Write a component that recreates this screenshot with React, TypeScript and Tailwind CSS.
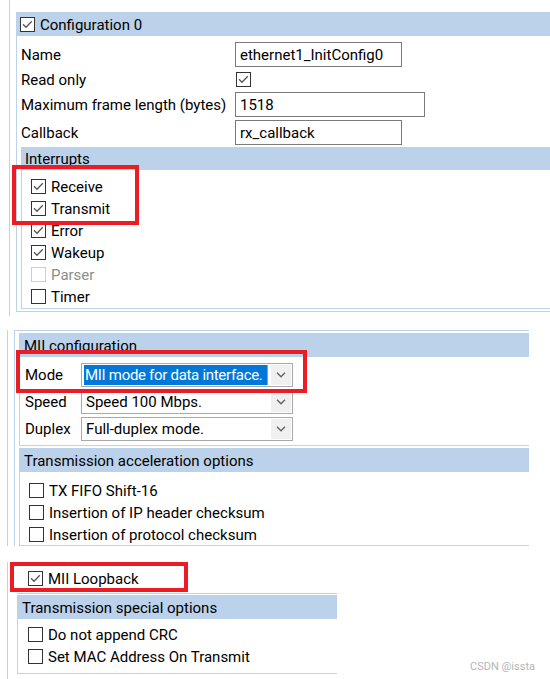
import React from "react"

const FONT = { fontFamily: 'Roboto, "Noto Sans", sans-serif' }

function Box({ checked, disabled }: { checked?: boolean; disabled?: boolean }) {
  return (
    <span
      className={
        "flex h-[15px] w-[15px] shrink-0 items-center justify-center border bg-white " +
        (disabled ? "border-[#cfcfcf]" : "border-[#333333]")
      }
    >
      {checked && (
        <svg width="13" height="13" viewBox="0 0 13 13">
          <path d="M2 6.3 L5 9.3 L10.8 3.3" fill="none" stroke="#555555" strokeWidth="1.25" />
        </svg>
      )}
    </span>
  )
}

function CheckRow({ label, checked, disabled }: { label: string; checked?: boolean; disabled?: boolean }) {
  return (
    <div className="flex h-[22px] items-center gap-[5px] whitespace-nowrap">
      <Box checked={checked} disabled={disabled} />
      <span className={"pt-[2px] " + (disabled ? "text-[#8d8d8d]" : "text-black")}>{label}</span>
    </div>
  )
}

function Chevron() {
  return (
    <svg width="10" height="6" viewBox="0 0 10 6">
      <path d="M1 0.8 L5 4.8 L9 0.8" fill="none" stroke="#606060" strokeWidth="1.3" />
    </svg>
  )
}

function Select({ value, selected }: { value: string; selected?: boolean }) {
  return (
    <div className="flex h-[24px] w-[212px] items-stretch border border-[#a9a9a9] bg-white p-[1px]">
      <div className="flex min-w-0 flex-1 items-stretch pr-[3px] pl-[1px]">
        {selected ? (
          <span className="flex flex-1 items-center overflow-hidden whitespace-nowrap border-r border-[#f08a24] bg-[#0078d7] pt-[2px] pl-[1px] tracking-[-0.3px] text-white">
            {value}
          </span>
        ) : (
          <span className="flex items-center whitespace-nowrap pt-[2px] pl-[2px]">{value}</span>
        )}
      </div>
      <div className="flex w-[20px] items-center justify-center bg-[#f0f0f0]">
        <Chevron />
      </div>
    </div>
  )
}

function Field({ value, width }: { value: string; width: string }) {
  return (
    <div className={"flex h-[25px] items-center border border-[#7a7a7a] bg-white pt-[2px] pl-[4px] " + width}>
      {value}
    </div>
  )
}

function Band({ children, className = "" }: { children: React.ReactNode; className?: string }) {
  return <div className={"flex items-center bg-[#bbd2ea] pt-[2px] " + className}>{children}</div>
}

export default function App() {
  return (
    <div className="relative h-[679px] w-[550px] overflow-hidden bg-white text-[15px] leading-none text-black" style={FONT}>
      {/* Configuration 0 */}
      <div className="pl-[9px]">
        <div className="h-[316px] border-l border-[#bcd3ea] pl-[6px] pt-[12px]">
          <div className="flex h-[24px] items-center gap-[5px] bg-[#bbd2ea] pl-[4px]">
            <Box checked />
            <span className="pt-[2px]">Configuration 0</span>
          </div>
          <div className="border-b border-l border-[#bcd3ea] pt-[5px] pb-[2px]">
            <div className="flex h-[27px] items-center pl-[4px]">
              <span className="w-[214px] whitespace-nowrap pt-[2px]">Name</span>
              <Field value="ethernet1_InitConfig0" width="w-[167px]" />
            </div>
            <div className="flex h-[23px] items-center pl-[4px]">
              <span className="w-[215px] whitespace-nowrap pt-[2px]">Read only</span>
              <Box checked />
            </div>
            <div className="flex h-[27px] items-center pl-[4px]">
              <span className="w-[214px] whitespace-nowrap pt-[2px]">Maximum frame length (bytes)</span>
              <Field value="1518" width="w-[190px]" />
            </div>
            <div className="flex h-[29px] items-center pl-[4px]">
              <span className="w-[214px] whitespace-nowrap pt-[2px]">Callback</span>
              <Field value="rx_callback" width="w-[167px]" />
            </div>

            {/* Interrupts */}
            <div className="ml-[4px]">
              <Band className="h-[23px] pl-[4px]">Interrupts</Band>
              <div className="border-b border-l border-[#bcd3ea] pt-[5px] pb-[1px] pl-[9px]">
                <CheckRow label="Receive" checked />
                <CheckRow label="Transmit" checked />
                <CheckRow label="Error" checked />
                <CheckRow label="Wakeup" checked />
                <CheckRow label="Parser" disabled />
                <CheckRow label="Timer" />
              </div>
            </div>
          </div>
        </div>
      </div>

      {/* MII configuration */}
      <div className="mt-[14px] ml-[7px] h-[216px] border-l border-[#bcd3ea] pl-[6px]">
        <div className="h-full w-[515px] border-t border-l border-[#bcd3ea] pt-[2px] pl-[4px]">
          <Band className="h-[24px] pl-[5px]">MII configuration</Band>
          <div className="border-b border-l border-[#bcd3ea] pt-[4px] pb-[3px] pl-[5px]">
            <div className="flex h-[27px] items-center">
              <span className="w-[56px] pt-[2px]">Mode</span>
              <Select value="MII mode for data interface." selected />
            </div>
            <div className="flex h-[27px] items-center">
              <span className="w-[56px] pt-[2px]">Speed</span>
              <Select value="Speed 100 Mbps." />
            </div>
            <div className="flex h-[27px] items-center">
              <span className="w-[56px] pt-[2px]">Duplex</span>
              <Select value="Full-duplex mode." />
            </div>
          </div>
          <Band className="mt-[2px] h-[24px] pl-[5px]">Transmission acceleration options</Band>
          <div className="border-b border-l border-[#bcd3ea] pt-[7px] pl-[9px]">
            <CheckRow label="TX FIFO Shift-16" />
            <CheckRow label="Insertion of IP header checksum" />
            <CheckRow label="Insertion of protocol checksum" />
          </div>
        </div>
      </div>

      {/* Loopback + special options */}
      <div className="mt-[16px] ml-[7px] h-[140px] border-l border-[#bcd3ea]">
        <div className="flex h-[31px] items-center pl-[20px] pt-[2px]">
          <CheckRow label="MII Loopback" checked />
        </div>
        <div className="ml-[9px] w-[320px] border-t border-[#bcd3ea] pt-[1px]">
          <Band className="h-[24px] pl-[5px]">Transmission special options</Band>
          <div className="border-b border-l border-[#bcd3ea] pt-[4px] pb-[6px] pl-[10px]">
            <CheckRow label="Do not append CRC" />
            <CheckRow label="Set MAC Address On Transmit" />
          </div>
        </div>
      </div>

      {/* highlight marks */}
      <div className="pointer-events-none absolute top-[165px] left-[12px] h-[60px] w-[127px] border-4 border-[#ec1c24]" />
      <div className="pointer-events-none absolute top-[350px] left-[16px] h-[43px] w-[291px] border-4 border-[#ec1c24]" />
      <div className="pointer-events-none absolute top-[562px] left-[10px] h-[30px] w-[178px] border-4 border-[#ec1c24]" />

      <span className="absolute top-[661px] left-[470px] text-[11px] text-[#b5b5b5]">CSDN @issta</span>
    </div>
  )
}
